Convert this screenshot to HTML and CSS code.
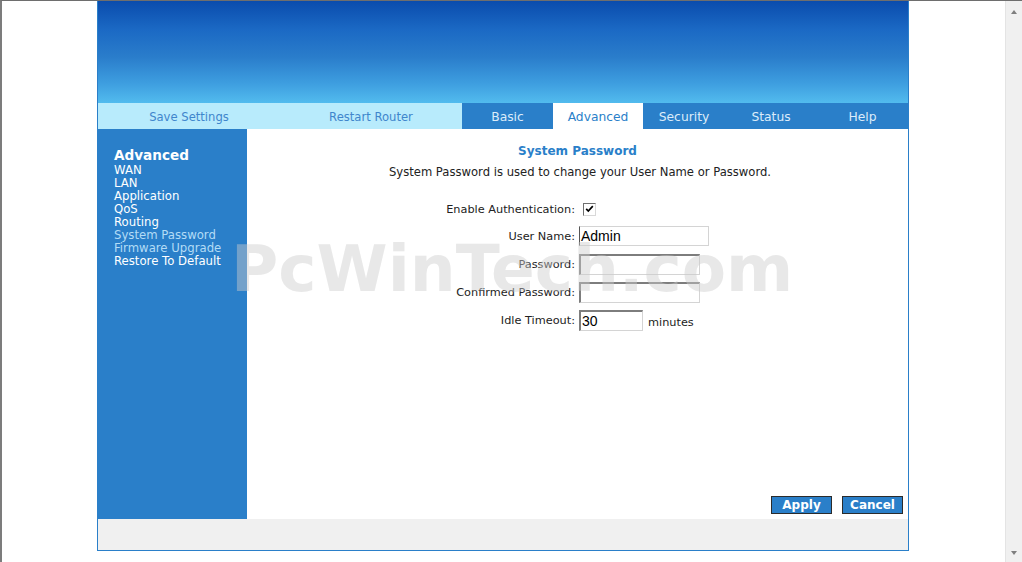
FILE: index.html
```html
<!DOCTYPE html>
<html>
<head>
<meta charset="utf-8">
<title>System Password</title>
<link rel="stylesheet" href="styles.css">
</head>
<body>
<div class="screen">
  <div class="viewport">
    <div class="page">
      <div class="header"></div>
      <div class="nav">
        <div class="nav-tools">
          <span class="tool">Save Settings</span>
          <span class="tool">Restart Router</span>
        </div>
        <div class="tab t1">Basic</div>
        <div class="tab t2 active">Advanced</div>
        <div class="tab t3">Security</div>
        <div class="tab t4">Status</div>
        <div class="tab t5">Help</div>
      </div>
      <div class="main">
        <div class="sidebar">
          <div class="side-title">Advanced</div>
          <div class="side-item">WAN</div>
          <div class="side-item">LAN</div>
          <div class="side-item">Application</div>
          <div class="side-item">QoS</div>
          <div class="side-item">Routing</div>
          <div class="side-item visited">System Password</div>
          <div class="side-item visited">Firmware Upgrade</div>
          <div class="side-item">Restore To Default</div>
        </div>
        <div class="content">
          <div class="title">System Password</div>
          <div class="desc">System Password is used to change your User Name or Password.</div>
          <div class="form">
            <div class="row first">
              <span class="label">Enable Authentication:</span>
              <span class="check"><svg width="11" height="11" viewBox="0 0 11 11"><path d="M2.2 4.8 L4.3 7 L8.8 2.2" fill="none" stroke="#000" stroke-width="1.7"/></svg></span>
            </div>
            <div class="row">
              <span class="label">User Name:</span>
              <span class="field user">Admin</span>
            </div>
            <div class="row">
              <span class="label">Password:</span>
              <span class="field pass"></span>
            </div>
            <div class="row">
              <span class="label">Confirmed Password:</span>
              <span class="field pass"></span>
            </div>
            <div class="row">
              <span class="label">Idle Timeout:</span>
              <span class="field idle">30</span>
              <span class="unit">minutes</span>
            </div>
          </div>
          <div class="buttons">
            <span class="btn">Apply</span>
            <span class="btn">Cancel</span>
          </div>
        </div>
      </div>
      <div class="footer"></div>
      <div class="watermark">PcWinTech.com</div>
    </div>
  </div>
  <div class="scrollbar">
    <span class="arrow up"></span>
    <span class="arrow down"></span>
  </div>
</div>
</body>
</html>
```

FILE: styles.css
```css
html, body {
  margin: 0;
  padding: 0;
  background: #fff;
}
body {
  font-family: "DejaVu Sans", Verdana, sans-serif;
}
.screen {
  width: 1022px;
  height: 562px;
  box-sizing: border-box;
  border-top: 1px solid #6e6e6e;
  border-left: 2px solid #7c7c7c;
  display: flex;
  overflow: hidden;
}
.viewport {
  flex: 1;
  display: flex;
  justify-content: center;
  align-items: flex-start;
}
.page {
  position: relative;
  width: 810px;
  margin-right: 1px;
  border: 1px solid #2a7fc9;
  border-top: none;
}
.header {
  height: 102px;
  background: linear-gradient(to bottom, #0a4cad 0%, #1b69c4 28%, #2a7dcb 55%, #3d9ddf 80%, #52bbee 100%);
}
.nav {
  display: flex;
  height: 26px;
}
.nav-tools {
  width: 364px;
  display: flex;
  background: #b8ebfc;
}
.tool {
  flex: 1;
  display: flex;
  align-items: center;
  justify-content: center;
  padding-top: 1px;
  font-size: 11.6px;
  color: #3f86cc;
}
.tab {
  display: flex;
  align-items: center;
  justify-content: center;
  padding-top: 1px;
  background: #2a7fc9;
  color: #dcecfa;
  font-size: 12.3px;
}
.t1 { width: 91px; }
.t2 { width: 90px; }
.t3 { width: 82px; }
.t4 { width: 92px; }
.t5 { width: 91px; }
.tab.active {
  background: #fff;
  color: #2a7fc9;
}
.main {
  display: flex;
  height: 390px;
}
.sidebar {
  width: 149px;
  background: #2a7fc9;
  box-sizing: border-box;
  padding: 18px 0 0 16px;
  color: #fff;
}
.side-title {
  font-weight: bold;
  font-size: 13.6px;
  line-height: 17px;
}
.side-item {
  font-size: 11.7px;
  line-height: 13px;
}
.side-item.visited {
  color: #b3dcf6;
}
.content {
  flex: 1;
  display: flex;
  flex-direction: column;
  padding: 14px 5px 5px 0;
}
.title {
  text-align: center;
  font-weight: bold;
  font-size: 12px;
  line-height: 17px;
  color: #2a7fc9;
  padding-left: 5px;
}
.desc {
  text-align: center;
  font-size: 11.6px;
  line-height: 16px;
  margin-top: 4px;
  color: #222;
  padding-left: 10px;
}
.form {
  margin-top: 17px;
  font-size: 11.3px;
  color: #222;
}
.row {
  display: flex;
  align-items: center;
  height: 28px;
}
.row.first {
  height: 25px;
}
.label {
  width: 328px;
  text-align: right;
  padding-right: 4px;
}
.check {
  width: 13px;
  height: 13px;
  box-sizing: border-box;
  margin-left: 4px;
  border-top: 1px solid #6f6f6f;
  border-left: 1px solid #6f6f6f;
  border-right: 1px solid #d8d8d8;
  border-bottom: 1px solid #d8d8d8;
  background: #fff;
  display: flex;
  align-items: center;
  justify-content: center;
}
.check svg {
  display: block;
}
.field {
  box-sizing: border-box;
  background: #fff;
  font-family: "Liberation Sans", Arial, sans-serif;
  font-size: 14px;
  color: #000;
  display: flex;
  align-items: center;
  padding-left: 1px;
}
.field.user {
  width: 130px;
  height: 20px;
  border: 1px solid #d4d4d4;
  border-left: 1px solid #555;
}
.field.pass {
  width: 121px;
  height: 21px;
  border-top: 2px solid #7d7d7d;
  border-left: 2px solid #7d7d7d;
  border-right: 1px solid #d4d4d4;
  border-bottom: 1px solid #d4d4d4;
}
.field.idle {
  width: 64px;
  height: 21px;
  border-top: 2px solid #7d7d7d;
  border-left: 2px solid #7d7d7d;
  border-right: 1px solid #d4d4d4;
  border-bottom: 1px solid #d4d4d4;
}
.unit {
  margin-left: 5px;
  margin-top: 5px;
}
.buttons {
  margin-top: auto;
  display: flex;
  justify-content: flex-end;
  gap: 10px;
}
.btn {
  width: 61px;
  height: 18px;
  box-sizing: border-box;
  border: 1px solid #2b2b2b;
  background: #2a7fc9;
  color: #fff;
  font-weight: bold;
  font-size: 12px;
  display: flex;
  align-items: center;
  justify-content: center;
}
.footer {
  height: 31px;
  background: #f0f0f0;
}
.watermark {
  position: absolute;
  left: 133px;
  top: 236px;
  font-family: "DejaVu Sans", sans-serif;
  font-weight: bold;
  font-size: 64.5px;
  line-height: 64px;
  color: rgba(205, 205, 205, 0.45);
  white-space: nowrap;
  pointer-events: none;
}
.scrollbar {
  width: 17px;
  height: 100%;
  background: #f0f0f0;
  border-left: 1px solid #e4e4e4;
  box-sizing: border-box;
  position: relative;
}
.arrow {
  position: absolute;
  left: 5px;
  width: 0;
  height: 0;
  border-left: 3.5px solid transparent;
  border-right: 3.5px solid transparent;
}
.arrow.up {
  top: 9px;
  border-bottom: 4px solid #7e7e7e;
}
.arrow.down {
  bottom: 7px;
  border-top: 4px solid #7e7e7e;
}
```
